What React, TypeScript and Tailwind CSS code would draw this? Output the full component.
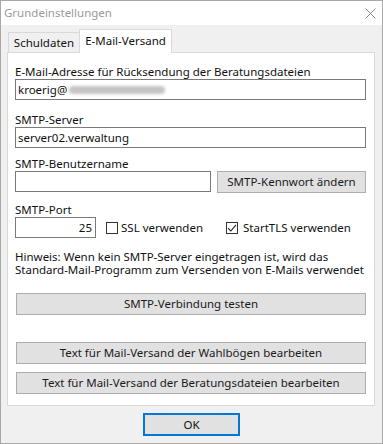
import React from "react";

function Checkbox({ checked }: { checked?: boolean }) {
  return (
    <div className="w-[12px] h-[12px] border border-[#333] bg-white flex items-center justify-center shrink-0">
      {checked && (
        <svg width="10" height="10" viewBox="0 0 10 10">
          <path d="M1 5.2 L3.8 8 L9 1.8" fill="none" stroke="#222" strokeWidth="1.1" />
        </svg>
      )}
    </div>
  );
}

function Btn({ children, className = "" }: { children: React.ReactNode; className?: string }) {
  return (
    <div
      className={
        "h-[22px] bg-[#e1e1e1] border border-[#adadad] flex items-center justify-center text-[11.5px] leading-[14px] text-[#1a1a1a] " +
        className
      }
    >
      {children}
    </div>
  );
}

export default function App() {
  return (
    <div className="w-[383px] h-[444px] bg-[#f0f0f0] border border-[#a8a8a8] flex flex-col font-['Noto_Sans',sans-serif] text-[11.5px] text-[#111] overflow-hidden">
      {/* Title bar */}
      <div className="h-[24px] bg-white flex items-center justify-between pl-[3px] pr-[6px] shrink-0">
        <span className="text-[#9a9a9a] text-[11.5px] leading-[14px]">Grundeinstellungen</span>
        <svg width="11" height="11" viewBox="0 0 11 11">
          <path d="M0.5 0.5L10.5 10.5M10.5 0.5L0.5 10.5" stroke="#8c8c8c" strokeWidth="1" />
        </svg>
      </div>

      {/* Tabs */}
      <div className="flex items-end pl-[7px] pt-[4px] h-[27px] shrink-0">
        <div className="h-[20px] w-[72px] border border-b-0 border-[#d9d9d9] bg-[#f0f0f0] flex items-center justify-center leading-[14px] pt-[1px]">
          Schuldaten
        </div>
        <div className="h-[24px] w-[93px] -ml-[1px] -mb-[1px] relative z-10 border border-b-0 border-[#d9d9d9] bg-white flex items-start justify-center pt-[4px] leading-[14px]">
          E-Mail-Versand
        </div>
      </div>

      {/* Panel */}
      <div className="ml-[6px] w-[368px] h-[354px] bg-white border border-[#d9d9d9] flex flex-col pl-[7px] pr-[8px] shrink-0">
        <div className="mt-[12px] leading-[14px]">E-Mail-Adresse für Rücksendung der Beratungsdateien</div>
        <div className="h-[21px] border border-[#7a7a7a] flex items-center pl-[2px]">
          <span>kroerig@</span>
          <span className="ml-[2px] h-[8px] w-[96px] rounded-full bg-[#c4c4c4] blur-[1.5px]" />
        </div>

        <div className="mt-[13px] leading-[14px]">SMTP-Server</div>
        <div className="h-[21px] border border-[#7a7a7a] flex items-center pl-[2px]">server02.verwaltung</div>

        <div className="mt-[9px] leading-[14px]">SMTP-Benutzername</div>
        <div className="flex items-start gap-[6px]">
          <div className="h-[21px] w-[196px] border border-[#7a7a7a]" />
          <Btn className="w-[149px] h-[20px]">SMTP-Kennwort ändern</Btn>
        </div>

        <div className="mt-[10px] leading-[14px]">SMTP-Port</div>
        <div className="flex items-center">
          <div className="h-[21px] w-[81px] border border-[#7a7a7a] flex items-center justify-end pr-[3px]">25</div>
          <div className="ml-[10px] flex items-center gap-[3px]">
            <Checkbox />
            <span>SSL verwenden</span>
          </div>
          <div className="ml-[23px] flex items-center gap-[5px]">
            <Checkbox checked />
            <span>StartTLS verwenden</span>
          </div>
        </div>

        <div className="mt-[12px] leading-[13px] whitespace-nowrap">
          Hinweis: Wenn kein SMTP-Server eingetragen ist, wird das
          <br />
          Standard-Mail-Programm zum Versenden von E-Mails verwendet
        </div>

        <Btn className="mt-[17px] ml-[1px] w-[350px]">SMTP-Verbindung testen</Btn>
        <Btn className="mt-[27px] ml-[1px] w-[350px]">Text für Mail-Versand der Wahlbögen bearbeiten</Btn>
        <Btn className="mt-[8px] ml-[1px] w-[350px]">Text für Mail-Versand der Beratungsdateien bearbeiten</Btn>
      </div>

      {/* OK */}
      <div className="flex justify-center mt-[7px]">
        <div className="h-[23px] w-[97px] border-2 border-[#0078d7] bg-[#e1e1e1] flex items-center justify-center leading-[14px]">
          OK
        </div>
      </div>
    </div>
  );
}
